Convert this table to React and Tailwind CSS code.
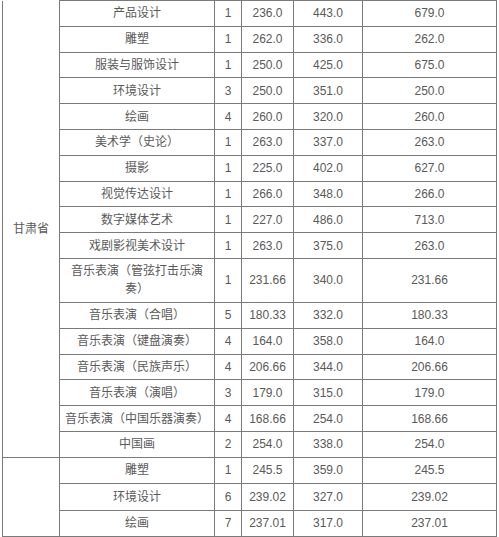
const groups = [
  {
    province: "甘肃省",
    rows: [
      ["产品设计", "1", "236.0", "443.0", "679.0"],
      ["雕塑", "1", "262.0", "336.0", "262.0"],
      ["服装与服饰设计", "1", "250.0", "425.0", "675.0"],
      ["环境设计", "3", "250.0", "351.0", "250.0"],
      ["绘画", "4", "260.0", "320.0", "260.0"],
      ["美术学（史论）", "1", "263.0", "337.0", "263.0"],
      ["摄影", "1", "225.0", "402.0", "627.0"],
      ["视觉传达设计", "1", "266.0", "348.0", "266.0"],
      ["数字媒体艺术", "1", "227.0", "486.0", "713.0"],
      ["戏剧影视美术设计", "1", "263.0", "375.0", "263.0"],
      ["音乐表演（管弦打击乐演奏）", "1", "231.66", "340.0", "231.66"],
      ["音乐表演（合唱）", "5", "180.33", "332.0", "180.33"],
      ["音乐表演（键盘演奏）", "4", "164.0", "358.0", "164.0"],
      ["音乐表演（民族声乐）", "4", "206.66", "344.0", "206.66"],
      ["音乐表演（演唱）", "3", "179.0", "315.0", "179.0"],
      ["音乐表演（中国乐器演奏）", "4", "168.66", "254.0", "168.66"],
      ["中国画", "2", "254.0", "338.0", "254.0"],
    ],
  },
  {
    province: "",
    rows: [
      ["雕塑", "1", "245.5", "359.0", "245.5"],
      ["环境设计", "6", "239.02", "327.0", "239.02"],
      ["绘画", "7", "237.01", "317.0", "237.01"],
    ],
  },
];

const cell = "border border-[#7a7a7a] text-center align-middle px-[3px] py-0 leading-[18px]";

export default function App() {
  return (
    <div className="bg-white w-[499px] h-[537px] overflow-hidden pl-[2px] font-['Liberation_Sans','Noto_Sans_CJK_SC',sans-serif] text-[12px] text-[#5a5a5a]">
      <table className="table-fixed border-collapse w-[494px]">
        <colgroup>
          <col className="w-[57px]" />
          <col className="w-[155px]" />
          <col className="w-[27px]" />
          <col className="w-[52px]" />
          <col className="w-[69px]" />
          <col className="w-[134px]" />
        </colgroup>
        <tbody>
          {groups.map((g, gi) =>
            g.rows.map((r, i) => (
              <tr
                key={gi + "-" + i}
                className={r[0].length > 12 ? "h-[44px]" : gi === 1 ? "h-[26.4px]" : "h-[25.8px]"}
              >
                {i === 0 && (
                  <td rowSpan={g.rows.length} className={cell + (gi === 0 ? " border-t-0" : "")}>
                    {g.province}
                  </td>
                )}
                {r.map((v, j) => (
                  <td key={j} className={cell}>
                    {v}
                  </td>
                ))}
              </tr>
            ))
          )}
        </tbody>
      </table>
    </div>
  );
}
